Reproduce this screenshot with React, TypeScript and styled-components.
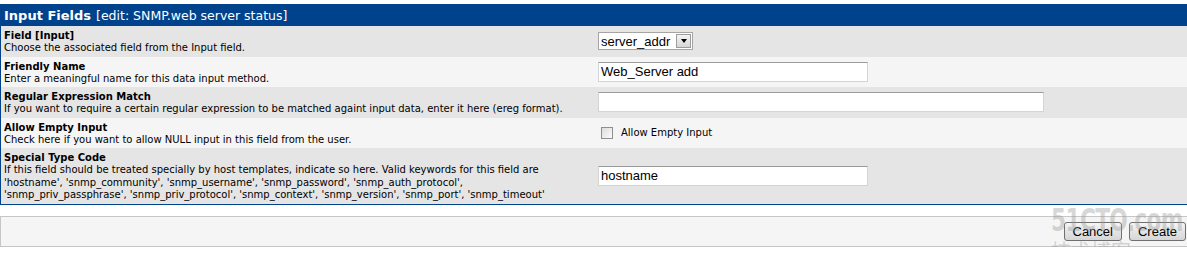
import styled, { createGlobalStyle } from 'styled-components';

const GlobalStyle = createGlobalStyle`
  html, body {
    margin: 0;
    padding: 0;
    overflow: hidden;
    background: #ffffff;
  }
  body {
    padding-top: 4px;
    font-family: 'DejaVu Sans', Verdana, sans-serif;
    color: #000000;
  }
`;

const Page = styled.div`
  position: relative;
  width: 1190px;
`;

const Panel = styled.div`
  border: 1px solid #00438c;
`;

const HeaderBar = styled.div`
  background: #00438c;
  color: #ffffff;
  height: 21px;
  padding: 0 3px;
  display: flex;
  align-items: center;
  gap: 5px;
  white-space: nowrap;
`;

const HeaderTitle = styled.span`
  font-weight: bold;
  font-size: 13px;
`;

const HeaderSub = styled.span`
  font-size: 12.5px;
`;

const Row = styled.div<{ $alt?: boolean }>`
  display: grid;
  grid-template-columns: 50% 50%;
  background: ${({ $alt }) => ($alt ? '#f5f5f5' : '#e5e5e5')};
`;

const LabelCell = styled.div`
  padding: 3px 3px 2px;
`;

const FieldTitle = styled.div`
  font-weight: bold;
  font-size: 10px;
  line-height: 13px;
`;

const FieldDesc = styled.div`
  font-size: 10px;
  line-height: 12.5px;
  white-space: nowrap;
`;

const ControlCell = styled.div`
  padding: 3px;
  display: flex;
  align-items: center;
`;

const TextBox = styled.div<{ $width: number }>`
  width: ${({ $width }) => $width}px;
  height: 20px;
  box-sizing: border-box;
  background: #ffffff;
  border: 1px solid #d4d4d4;
  border-top-color: #9a9a9a;
  padding: 0 2px;
  font-family: 'Liberation Sans', Arial, sans-serif;
  font-size: 13px;
  line-height: 18px;
  white-space: nowrap;
`;

const SelectBox = styled.div`
  width: 95px;
  height: 18px;
  box-sizing: border-box;
  display: flex;
  align-items: center;
  justify-content: space-between;
  background: #ffffff;
  border: 1px solid #a5a5a5;
  padding: 0 1px 0 2px;
  font-family: 'Liberation Sans', Arial, sans-serif;
  font-size: 13px;
`;

const SelectArrow = styled.span`
  width: 15px;
  height: 14px;
  box-sizing: border-box;
  border: 1px solid #9c9c9c;
  background: linear-gradient(#f4f4f4, #d6d6d6);
  display: flex;
  align-items: center;
  justify-content: center;
  &::after {
    content: '';
    border-left: 3.5px solid transparent;
    border-right: 3.5px solid transparent;
    border-top: 4px solid #000000;
  }
`;

const CheckLabel = styled.label`
  display: flex;
  align-items: center;
  gap: 8px;
  padding-left: 3px;
  font-size: 10px;
`;

const CheckBox = styled.span`
  width: 12px;
  height: 12px;
  box-sizing: border-box;
  border: 1px solid #8f8f8f;
  background: linear-gradient(135deg, #dcdcdc, #fbfbfb);
`;

const ActionBar = styled.div`
  margin-top: 11px;
  border: 1px solid #c6c6c6;
  background: #f5f5f5;
  height: 29px;
  padding: 0 3px;
  display: flex;
  align-items: center;
  justify-content: flex-end;
  gap: 7px;
`;

const Button = styled.button`
  height: 19px;
  padding: 0 8px;
  border: 1px solid #707070;
  border-radius: 3px;
  background: linear-gradient(#f6f6f6, #e4e4e4 50%, #d6d6d6);
  font-family: 'Liberation Sans', Arial, sans-serif;
  font-size: 13px;
  line-height: 15px;
  color: #000000;
`;

/* faint site watermark stamped over the bottom-right corner */
const Watermark = styled.div`
  position: absolute;
  left: 1051px;
  top: 197px;
  width: 128px;
  pointer-events: none;
  color: rgba(150, 150, 150, 0.38);
  display: flex;
  flex-direction: column;
`;

const MarkLogo = styled.span`
  display: inline-block;
  width: 128px;
  font-family: 'DejaVu Sans', sans-serif;
  font-weight: bold;
  font-size: 32px;
  line-height: 39px;
  letter-spacing: -1px;
  white-space: nowrap;
  transform: scaleX(0.68);
  transform-origin: left center;
`;

const MarkLine = styled.div`
  display: flex;
  align-items: flex-end;
  gap: 14px;
`;

const MarkCjk = styled.span`
  font-family: 'Noto Sans CJK SC', sans-serif;
  font-size: 20px;
  line-height: 22px;
`;

const MarkBlog = styled.span`
  font-family: 'Liberation Sans', sans-serif;
  font-weight: bold;
  font-size: 11px;
  line-height: 17px;
`;

type Field = {
  title: string;
  desc: string[];
  control: React.ReactNode;
};

const fields: Field[] = [
  {
    title: 'Field [Input]',
    desc: ['Choose the associated field from the Input field.'],
    control: (
      <SelectBox>
        <span>server_addr</span>
        <SelectArrow />
      </SelectBox>
    ),
  },
  {
    title: 'Friendly Name',
    desc: ['Enter a meaningful name for this data input method.'],
    control: <TextBox $width={270}>Web_Server add</TextBox>,
  },
  {
    title: 'Regular Expression Match',
    desc: [
      'If you want to require a certain regular expression to be matched againt input data, enter it here (ereg format).',
    ],
    control: <TextBox $width={446} />,
  },
  {
    title: 'Allow Empty Input',
    desc: ['Check here if you want to allow NULL input in this field from the user.'],
    control: (
      <CheckLabel>
        <CheckBox />
        Allow Empty Input
      </CheckLabel>
    ),
  },
  {
    title: 'Special Type Code',
    desc: [
      'If this field should be treated specially by host templates, indicate so here. Valid keywords for this field are',
      "'hostname', 'snmp_community', 'snmp_username', 'snmp_password', 'snmp_auth_protocol',",
      "'snmp_priv_passphrase', 'snmp_priv_protocol', 'snmp_context', 'snmp_version', 'snmp_port', 'snmp_timeout'",
    ],
    control: <TextBox $width={270}>hostname</TextBox>,
  },
];

export default function App() {
  return (
    <Page>
      <GlobalStyle />
      <Panel>
        <HeaderBar>
          <HeaderTitle>Input Fields</HeaderTitle>
          <HeaderSub>[edit: SNMP.web server status]</HeaderSub>
        </HeaderBar>
        {fields.map((f, i) => (
          <Row key={f.title} $alt={i % 2 === 1}>
            <LabelCell>
              <FieldTitle>{f.title}</FieldTitle>
              {f.desc.map((line) => (
                <FieldDesc key={line}>{line}</FieldDesc>
              ))}
            </LabelCell>
            <ControlCell>{f.control}</ControlCell>
          </Row>
        ))}
      </Panel>
      <ActionBar>
        <Button>Cancel</Button>
        <Button>Create</Button>
      </ActionBar>
      <Watermark>
        <MarkLogo>51CTO.com</MarkLogo>
        <MarkLine>
          <MarkCjk>技术博客</MarkCjk>
          <MarkBlog>Blog</MarkBlog>
        </MarkLine>
      </Watermark>
    </Page>
  );
}
